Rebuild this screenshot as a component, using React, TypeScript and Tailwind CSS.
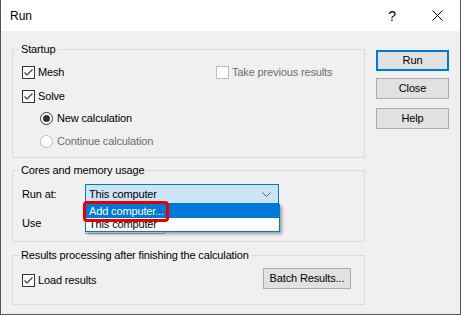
import React from "react";

const font = { fontFamily: '"Liberation Sans", Arial, sans-serif' };

function Check({ checked, disabled }: { checked?: boolean; disabled?: boolean }) {
  return (
    <div
      className={
        "w-[13px] h-[13px] shrink-0 bg-white border flex items-center justify-center " +
        (disabled ? "border-[#bcbcbc]" : "border-[#333333]")
      }
    >
      {checked && (
        <svg width="11" height="11" viewBox="0 0 11 11">
          <polyline points="1.5,5.5 4,8 9.5,2.5" fill="none" stroke="#333333" strokeWidth="1.1" />
        </svg>
      )}
    </div>
  );
}

function Radio({ checked, disabled }: { checked?: boolean; disabled?: boolean }) {
  return (
    <div
      className={
        "w-[13px] h-[13px] shrink-0 rounded-full bg-white border flex items-center justify-center " +
        (disabled ? "border-[#bcbcbc]" : "border-[#333333]")
      }
    >
      {checked && <div className="w-[7px] h-[7px] rounded-full bg-[#333333]" />}
    </div>
  );
}

function Btn({ children, def, className = "" }: { children: React.ReactNode; def?: boolean; className?: string }) {
  return (
    <div
      className={
        "h-[21px] bg-[#e1e1e1] flex items-center justify-center text-black " +
        (def ? "border-2 border-[#0078d7] " : "border border-[#adadad] ") +
        className
      }
    >
      {children}
    </div>
  );
}

function Group({ title, className = "", children }: { title: string; className?: string; children: React.ReactNode }) {
  return (
    <div className={"relative border border-[#dcdcdc] " + className}>
      <span className="absolute -top-[8px] left-[6px] px-[2px] bg-[#f0f0f0] leading-[14px] whitespace-nowrap">
        {title}
      </span>
      {children}
    </div>
  );
}

export default function App() {
  return (
    <div
      className="w-[461px] h-[315px] bg-[#f0f0f0] border-l border-r border-b border-[#555555] flex flex-col text-[11px] tracking-[-0.14px] text-black overflow-hidden"
      style={font}
    >
      {/* Title bar */}
      <div className="h-[31px] bg-white flex items-center shrink-0">
        <span className="pl-[9px] text-[12px] tracking-normal leading-none">Run</span>
        <span className="ml-auto mr-[36px] text-[14px] leading-none">?</span>
        <svg width="11" height="11" viewBox="0 0 11 11" className="mr-[17px]">
          <path d="M0.5 0.5 L10.5 10.5 M10.5 0.5 L0.5 10.5" stroke="#000" strokeWidth="1" />
        </svg>
      </div>

      {/* Content */}
      <div className="flex flex-1 pl-[11px]">
        <div className="w-[353px] flex flex-col pt-[18px]">
          <Group title="Startup" className="h-[109px]">
            <div className="flex flex-col pl-[9px] pt-[16px]">
              <div className="flex items-center h-[13px]">
                <div className="flex items-center w-[194px]">
                  <Check checked />
                  <span className="ml-[3px]">Mesh</span>
                </div>
                <Check disabled />
                <span className="ml-[3px] text-[#6d6d6d]">Take previous results</span>
              </div>
              <div className="flex items-center h-[13px] mt-[11px]">
                <Check checked />
                <span className="ml-[3px]">Solve</span>
              </div>
              <div className="flex items-center h-[13px] mt-[9px] pl-[18px]">
                <Radio checked />
                <span className="ml-[4px]">New calculation</span>
              </div>
              <div className="flex items-center h-[13px] mt-[10px] pl-[18px]">
                <Radio disabled />
                <span className="ml-[4px] text-[#6d6d6d]">Continue calculation</span>
              </div>
            </div>
          </Group>

          <Group title="Cores and memory usage" className="h-[72px] mt-[12px]">
            <div className="flex flex-col pl-[9px] pt-[13px]">
              <div className="flex items-center h-[20px]">
                <span className="w-[63px]">Run at:</span>
                <div className="relative w-[194px] h-[20px] bg-[#cce4f7] border border-[#0078d7] flex items-center pl-[3px]">
                  <span>This computer</span>
                  <svg width="9" height="5" viewBox="0 0 9 5" className="ml-auto mr-[7px]">
                    <polyline points="0.5,0.5 4.5,4.5 8.5,0.5" fill="none" stroke="#555555" strokeWidth="1" />
                  </svg>
                  {/* dropdown list overlay */}
                  <div className="absolute left-[-1px] top-[19px] w-[195px] z-20 bg-white border border-[#0078d7] border-t-0 shadow-[2px_2px_3px_rgba(0,0,0,0.35)] flex flex-col">
                    <div className="h-[14px] bg-[#0078d7] text-white flex items-center pl-[3px]">Add computer...</div>
                    <div className="h-[13px] bg-white flex items-center pl-[3px]">This computer</div>
                  </div>
                  {/* red highlight */}
                  <div className="absolute left-[-3px] top-[16px] w-[86px] h-[21px] border-[3px] border-[#e60000] rounded-[4px] z-30" />
                </div>
              </div>
              <div className="flex items-center h-[21px] mt-[9px]">
                <span className="w-[63px]">Use</span>
                <div className="w-[80px] h-[21px] bg-white border border-[#adadad]" />
              </div>
            </div>
          </Group>

          <Group title="Results processing after finishing the calculation" className="h-[50px] mt-[13px]">
            <div className="flex items-center pl-[9px] pr-[13px] pt-[12px]">
              <div className="flex items-center mt-[3px]">
                <Check checked />
                <span className="ml-[3px]">Load results</span>
              </div>
              <Btn className="ml-auto w-[88px]">Batch Results...</Btn>
            </div>
          </Group>
        </div>

        <div className="flex flex-col pt-[19px] ml-[11px]">
          <Btn def className="w-[73px]">Run</Btn>
          <Btn className="w-[73px] mt-[7px]">Close</Btn>
          <Btn className="w-[73px] mt-[9px]">Help</Btn>
        </div>
      </div>
    </div>
  );
}
